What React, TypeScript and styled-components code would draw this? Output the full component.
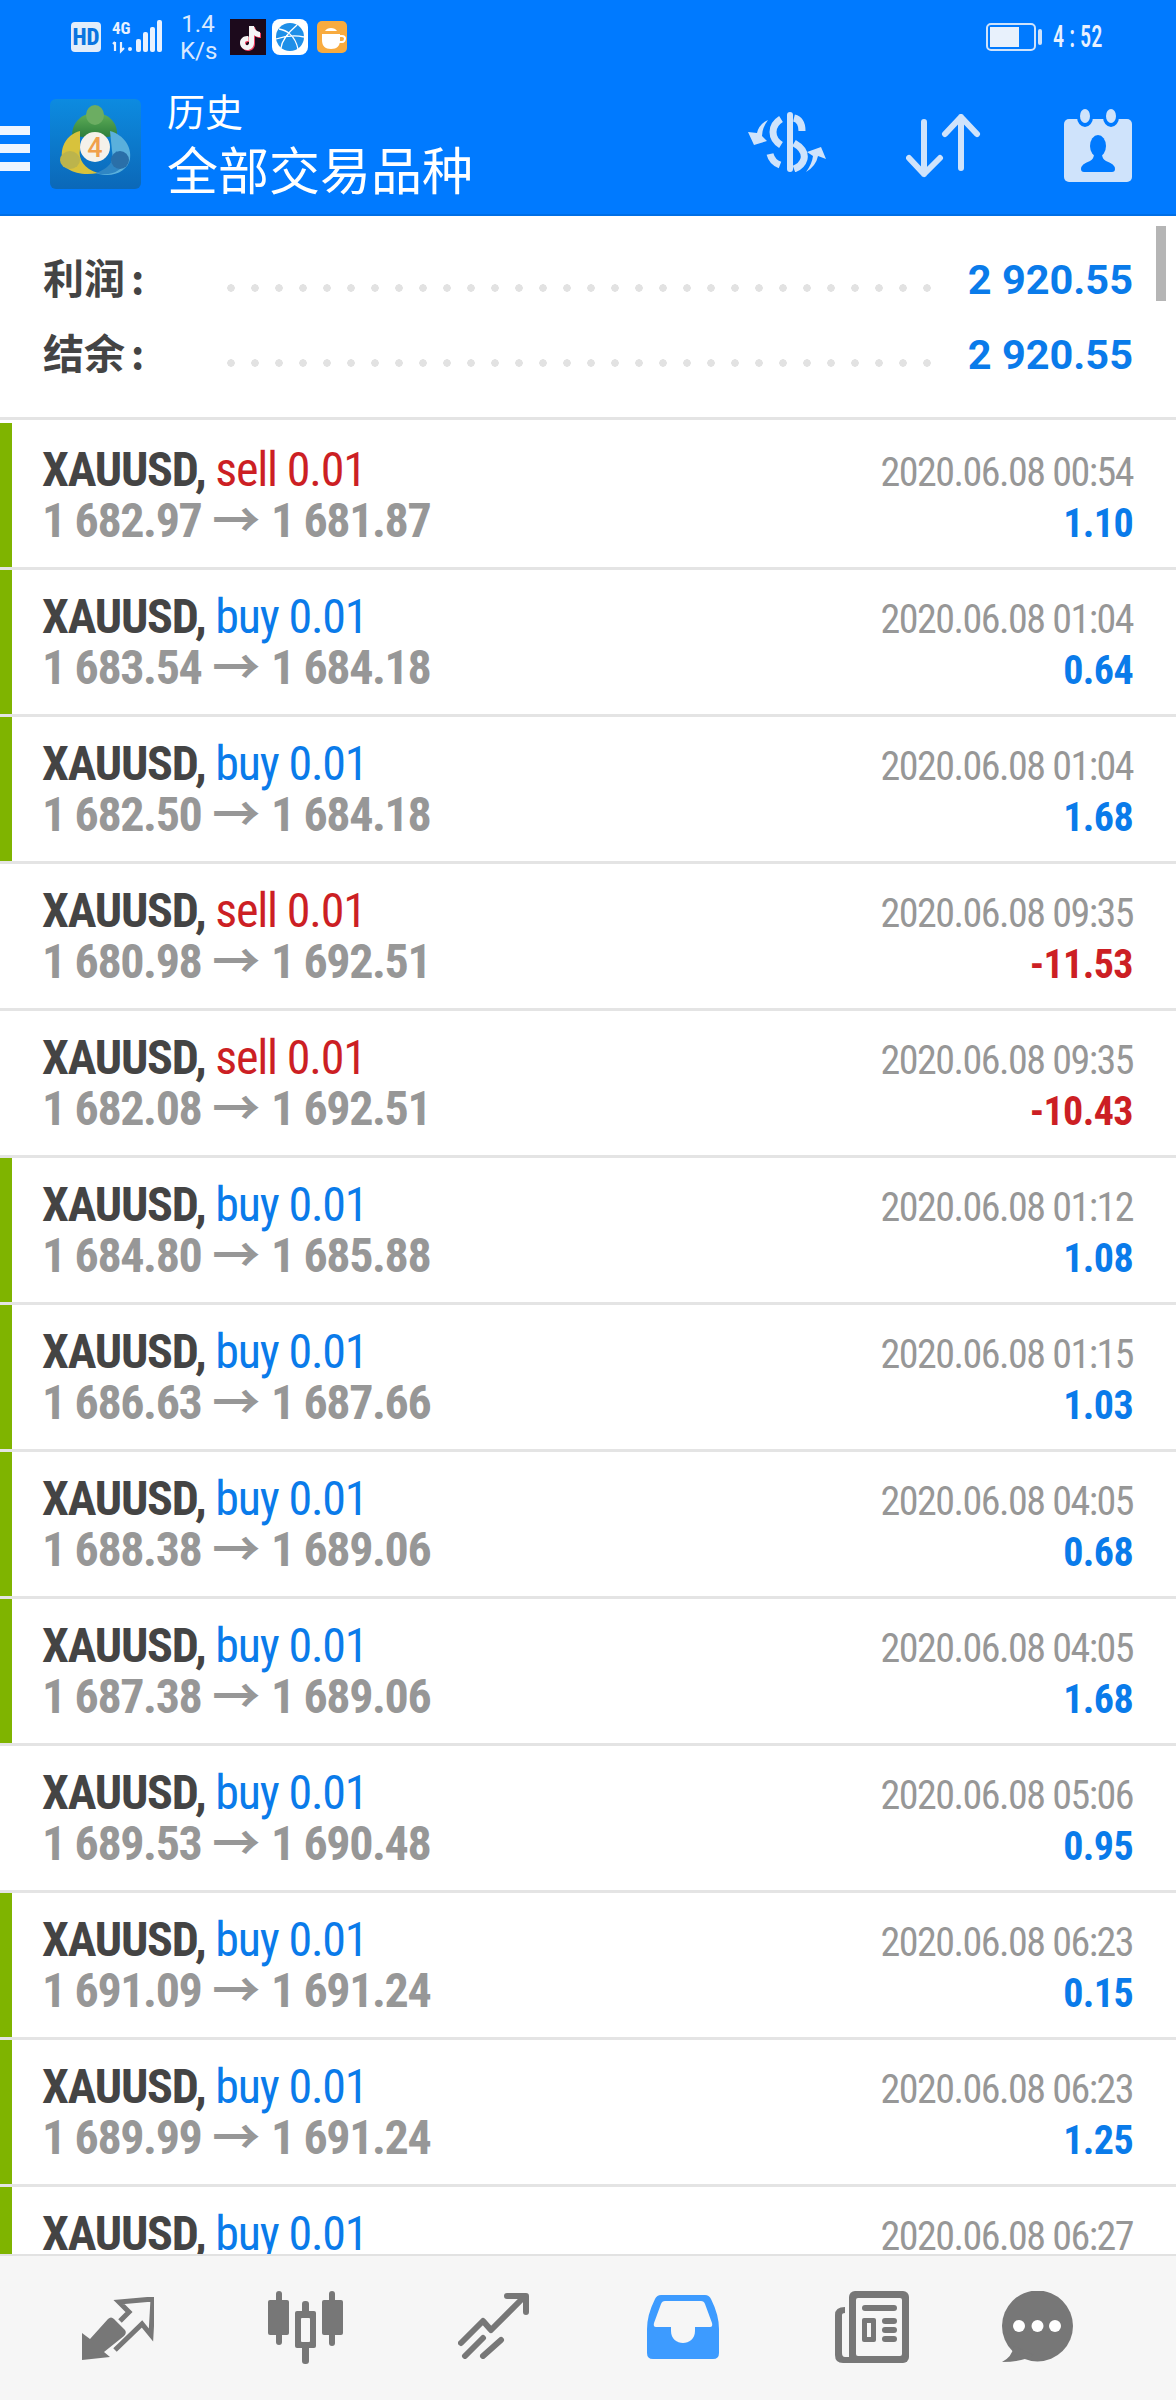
import { createGlobalStyle, styled } from "styled-components";

const GlobalStyle = createGlobalStyle`
  html, body {
    margin: 0;
    padding: 0;
    background: #fff;
  }
  body {
    font-family: Roboto, "Noto Sans CJK SC", sans-serif;
  }
`;

const Page = styled.div`
  width: 1176px;
  height: 2400px;
  display: flex;
  flex-direction: column;
  overflow: hidden;
  position: relative;
`;

const Header = styled.header`
  height: 216px;
  flex: none;
  box-sizing: border-box;
  background: #007aff;
  border-bottom: 2px solid #006fe6;
  display: flex;
  flex-direction: column;
`;

const StatusBar = styled.div`
  height: 97px;
  flex: none;
  padding: 15px 72px 0 71px;
  box-sizing: border-box;
  display: flex;
  align-items: flex-start;
  color: #e8f1ff;
`;

const HdBadge = styled.div`
  width: 30px;
  height: 30px;
  margin-top: 7px;
  border-radius: 4px;
  background: #e3edfa;
  color: #0a74e0;
  font-size: 23px;
  font-weight: 800;
  font-stretch: 75%;
  display: flex;
  align-items: center;
  justify-content: center;
`;

const SignalIcon = styled.svg`
  width: 50px;
  height: 34px;
  margin: 5px 0 0 11px;
`;

const Speed = styled.div`
  width: 36px;
  margin: -4px 0 0 18px;
  font-size: 24px;
  line-height: 27px;
  text-align: center;
  color: #d9e9ff;
`;

const AppBadge = styled.svg`
  width: 36px;
  height: 36px;
  margin: 4px 0 0 6px;
  &:first-of-type {
    margin-left: 0;
  }
`;

const BadgeGroup = styled.div`
  display: flex;
  margin-left: 14px;
`;

const Spacer = styled.div`
  flex: 1;
`;

const Battery = styled.div`
  width: 50px;
  height: 28px;
  margin-top: 8px;
  box-sizing: border-box;
  border: 2px solid #cfe3fb;
  border-radius: 5px;
  padding: 2px;
  position: relative;
  &::after {
    content: "";
    position: absolute;
    right: -8px;
    top: 4px;
    width: 4px;
    height: 16px;
    border-radius: 2px;
    background: #cfe3fb;
  }
`;

const BatteryFill = styled.div`
  width: 68%;
  height: 100%;
  background: #e8f1fc;
`;

const Clock = styled.div`
  width: 51px;
  margin: 6px 0 0 17px;
  font-size: 31px;
  font-weight: 500;
  font-stretch: 75%;
  line-height: 32px;
  white-space: nowrap;
  transform: scaleX(0.72);
  transform-origin: left center;
`;

const Toolbar = styled.div`
  flex: 1;
  display: flex;
  align-items: flex-start;
`;

const MenuButton = styled.div`
  width: 30px;
  margin-top: 29px;
  display: flex;
  flex-direction: column;
  gap: 9px;
  span {
    height: 9px;
    background: #eef5ff;
  }
`;

const Logo = styled.svg`
  width: 91px;
  height: 90px;
  margin: 2px 0 0 20px;
  flex: none;
`;

const Titles = styled.div`
  margin-left: 26px;
  color: #fff;
  font-family: "Noto Sans CJK SC", sans-serif;
  font-weight: 400;
`;

const Title = styled.div`
  font-size: 38px;
  line-height: 48px;
  margin-top: -11px;
`;

const Subtitle = styled.div`
  font-size: 51px;
  line-height: 60px;
  margin-top: 4px;
`;

const ActionIcon = styled.svg<{ $gap: number }>`
  flex: none;
  margin-left: ${(p) => p.$gap}px;
  fill: #cfe3fb;
  stroke: #cfe3fb;
`;

const Summary = styled.section`
  height: 204px;
  flex: none;
  box-sizing: border-box;
  border-bottom: 3px solid #e4e4e4;
  padding: 27px 43px 0 43px;
`;

const SummaryRow = styled.div`
  height: 75px;
  display: flex;
  align-items: center;
`;

const SummaryLabel = styled.div`
  width: 184px;
  flex: none;
  margin-top: -10px;
  font-family: "Noto Sans CJK SC", sans-serif;
  font-size: 41px;
  font-weight: 700;
  color: #444;
`;

const Colon = styled.span`
  margin-left: 6px;
`;

const Dots = styled.div`
  width: 708px;
  flex: none;
  height: 8px;
  margin-top: 14px;
  background: radial-gradient(circle at 4px 4px, #e2e2e2 3.5px, transparent 4px) left / 24px 8px repeat-x;
`;

const SummaryValue = styled.div`
  flex: 1;
  margin-top: -3px;
  text-align: right;
  font-size: 41.5px;
  font-weight: 700;
  color: #0a7bea;
  white-space: nowrap;
`;

const ScrollThumb = styled.div`
  position: absolute;
  left: 1156px;
  top: 226px;
  width: 10px;
  height: 75px;
  background: #b5b5b5;
`;

const List = styled.main`
  flex: 1;
  min-height: 0;
  overflow: hidden;
  padding-top: 3px;
`;

const Row = styled.div`
  height: 147px;
  box-sizing: border-box;
  border-bottom: 3px solid #e4e4e4;
  display: flex;
`;

const Marker = styled.div<{ $on: boolean }>`
  width: 12px;
  flex: none;
  background: ${(p) => (p.$on ? "#7fb400" : "transparent")};
`;

const RowBody = styled.div`
  flex: 1;
  display: flex;
  justify-content: space-between;
  padding: 21px 43px 0 30px;
  font-stretch: 75%;
`;

const Column = styled.div<{ $right?: boolean }>`
  display: flex;
  flex-direction: column;
  align-items: ${(p) => (p.$right ? "flex-end" : "flex-start")};
  padding-top: ${(p) => (p.$right ? 3 : 0)}px;
`;

const Line = styled.div`
  height: 51px;
  line-height: 51px;
  font-size: 48px;
  letter-spacing: -1.2px;
  white-space: nowrap;
`;

const Symbol = styled.span`
  font-weight: 700;
  color: #444;
`;

const Side = styled.span<{ $sell: boolean }>`
  color: ${(p) => (p.$sell ? "#cc1f24" : "#0a7bea")};
`;

const Prices = styled(Line)`
  font-weight: 700;
  letter-spacing: -1.4px;
  color: #979797;
`;

const Arrow = styled.span`
  margin: 0 12px 0 11px;
`;

const DateText = styled(Line)`
  font-size: 40px;
  letter-spacing: -1.5px;
  color: #979797;
`;

const Profit = styled(Line)<{ $loss: boolean }>`
  font-size: 40px;
  font-weight: 700;
  letter-spacing: -0.6px;
  color: ${(p) => (p.$loss ? "#cc1f24" : "#0a7bea")};
`;

const TabBar = styled.nav`
  height: 146px;
  flex: none;
  box-sizing: border-box;
  background: #f6f6f6;
  border-top: 2px solid #e2e2e2;
  display: grid;
  grid-template-columns: 82px 186px 190px 189px 188px 167px 1fr;
  align-items: start;
  padding-top: 35px;
`;

const TabIcon = styled.svg<{ $col: number; $top?: number }>`
  grid-column: ${(p) => p.$col};
  margin-top: ${(p) => p.$top ?? 0}px;
  fill: #777;
  stroke: #777;
`;

const InboxIcon = styled(TabIcon)`
  fill: #3d9bff;
  stroke: none;
`;

type Trade = {
  side: "buy" | "sell";
  open: string;
  close: string;
  time: string;
  profit: string;
  marked: boolean;
};

const trades: Trade[] = [
  { side: "sell", open: "1 682.97", close: "1 681.87", time: "2020.06.08 00:54", profit: "1.10", marked: true },
  { side: "buy", open: "1 683.54", close: "1 684.18", time: "2020.06.08 01:04", profit: "0.64", marked: true },
  { side: "buy", open: "1 682.50", close: "1 684.18", time: "2020.06.08 01:04", profit: "1.68", marked: true },
  { side: "sell", open: "1 680.98", close: "1 692.51", time: "2020.06.08 09:35", profit: "-11.53", marked: false },
  { side: "sell", open: "1 682.08", close: "1 692.51", time: "2020.06.08 09:35", profit: "-10.43", marked: false },
  { side: "buy", open: "1 684.80", close: "1 685.88", time: "2020.06.08 01:12", profit: "1.08", marked: true },
  { side: "buy", open: "1 686.63", close: "1 687.66", time: "2020.06.08 01:15", profit: "1.03", marked: true },
  { side: "buy", open: "1 688.38", close: "1 689.06", time: "2020.06.08 04:05", profit: "0.68", marked: true },
  { side: "buy", open: "1 687.38", close: "1 689.06", time: "2020.06.08 04:05", profit: "1.68", marked: true },
  { side: "buy", open: "1 689.53", close: "1 690.48", time: "2020.06.08 05:06", profit: "0.95", marked: false },
  { side: "buy", open: "1 691.09", close: "1 691.24", time: "2020.06.08 06:23", profit: "0.15", marked: true },
  { side: "buy", open: "1 689.99", close: "1 691.24", time: "2020.06.08 06:23", profit: "1.25", marked: true },
  { side: "buy", open: "1 690.00", close: "1 691.24", time: "2020.06.08 06:27", profit: "1.24", marked: true },
];

function MtLogo() {
  return (
    <Logo viewBox="0 0 91 90">
      <defs>
        <linearGradient id="tile" x1="0" y1="0" x2="0" y2="1">
          <stop offset="0" stopColor="#0d8be0" />
          <stop offset="1" stopColor="#0b68b8" />
        </linearGradient>
        <linearGradient id="leaf" x1="0" y1="0" x2="0" y2="1">
          <stop offset="0" stopColor="#5fae58" />
          <stop offset="1" stopColor="#2f7f3c" />
        </linearGradient>
      </defs>
      <rect width="91" height="90" rx="6" fill="url(#tile)" />
      <path d="M22 37C22 22 33 14 45 14C57 14 68 22 67 37L56 38L34 38Z" fill="url(#leaf)" />
      <ellipse cx="45" cy="16" rx="9" ry="10" fill="#6cad62" />
      <path d="M30 32C16 36 11 48 12 58C10 70 28 78 48 74C34 70 28 60 30 50Z" fill="#d8c23c" />
      <ellipse cx="20" cy="61" rx="10" ry="9" fill="#bcb44c" />
      <path d="M60 32C74 36 82 48 80 60C78 72 62 80 46 74C60 72 64 62 62 52Z" fill="#5ab0dc" />
      <path d="M66 52C64 62 58 70 46 74C60 78 72 72 76 62Z" fill="#2f86c4" />
      <ellipse cx="70" cy="61" rx="9" ry="9" fill="#2a6fa8" />
      <circle cx="45" cy="48" r="15" fill="#f5f1ea" />
      <text x="45" y="58" textAnchor="middle" fontSize="27" fontWeight="500" fontFamily="Roboto, sans-serif" fill="#f0a04b">4</text>
    </Logo>
  );
}

export default function App() {
  return (
    <Page>
      <GlobalStyle />
      <Header>
        <StatusBar>
          <HdBadge>HD</HdBadge>
          <SignalIcon viewBox="0 0 50 34">
            <text x="0" y="14" fontSize="17" fontWeight="700" fontFamily="Roboto, sans-serif" style={{ fontStretch: "75%" }} fill="#e8f1ff">4G</text>
            <path d="M3 22v9M1 24l2-2M9 22v9l3-3" stroke="#e8f1ff" strokeWidth="2.200" fill="none" />
            <g fill="#e8f1ff">
              <rect x="16" y="27" width="4" height="4" rx="2" />
              <rect x="24" y="19" width="5" height="13" rx="2" />
              <rect x="31" y="12" width="5" height="20" rx="2" />
              <rect x="38" y="7" width="5" height="25" rx="2" />
              <rect x="45" y="0" width="5" height="32" rx="2" />
            </g>
          </SignalIcon>
          <Speed>1.4<br />K/s</Speed>
          <BadgeGroup>
            <AppBadge viewBox="0 0 36 36">
              <rect width="36" height="36" fill="#1c0a1c" />
              <path d="M19 7h5c.5 3.500 2.500 5.500 6 6v5c-2.500 0-4.500-.7-6-1.800V24c0 4.500-3.500 7-7 7s-7-3-7-7c0-4.500 4-7.500 8.500-6.800v5c-2-.7-3.500.3-3.500 1.800 0 1.400 1 2.200 2 2.200s2-.8 2-2.200z" fill="#f04060" transform="translate(1 1)" />
              <path d="M19 7h5c.5 3.500 2.500 5.500 6 6v5c-2.500 0-4.500-.7-6-1.800V24c0 4.500-3.500 7-7 7s-7-3-7-7c0-4.500 4-7.500 8.500-6.800v5c-2-.7-3.500.3-3.500 1.800 0 1.400 1 2.200 2 2.200s2-.8 2-2.200z" fill="#f5f5f5" />
            </AppBadge>
            <AppBadge viewBox="0 0 36 36">
              <rect width="36" height="36" rx="8" fill="#fff" />
              <circle cx="18" cy="18" r="14" fill="#1e8fe8" />
              <path d="M7 10c7 1 16 6 19 20M25 6C18 12 10 20 9 29M4 20c9-3 19-4 28-2" stroke="#fff" strokeWidth="1.300" fill="none" />
            </AppBadge>
            <AppBadge viewBox="0 0 36 36">
              <rect x="3" y="2" width="30" height="32" rx="5" fill="#f8ab3f" />
              <path d="M8 15h18v6c0 6-3 9-9 9s-9-3-9-9z" fill="#fff" />
              <path d="M25 17h3c2 0 3 1 3 2.500S30 23 28 23h-3" stroke="#fff" strokeWidth="2" fill="none" />
              <path d="M11 12c2-4 10-4 12 0z" fill="#fff" />
            </AppBadge>
          </BadgeGroup>
          <Spacer />
          <Battery><BatteryFill /></Battery>
          <Clock>4 : 52</Clock>
        </StatusBar>
        <Toolbar>
          <MenuButton><span /><span /><span /></MenuButton>
          <MtLogo />
          <Titles>
            <Title>历史</Title>
            <Subtitle>全部交易品种</Subtitle>
          </Titles>
          <Spacer />
          <ActionIcon $gap={0} width="78" height="60" viewBox="0 0 78 60" style={{ marginTop: 15 }} strokeWidth="0">
            <rect x="39" width="6" height="60" rx="3" />
            <g fill="none" strokeWidth="7">
              <path d="M33 7Q25 12 25 20Q25 28 33 33" />
              <path d="M46 6Q54 8 54 19" />
              <path d="M22 42Q24 50 32 53" />
              <path d="M46 31Q58 38 56 47Q54 54 46 57" />
            </g>
            <path d="M20 8Q11 12 9 21L0 20L6 33L19 29L14 24Q14 16 20 8z" strokeWidth="0" />
            <path d="M58 60Q68 54 70 44L78 47L73 35L59 40L65 44Q64 52 58 60z" strokeWidth="0" />
          </ActionIcon>
          <ActionIcon $gap={80} width="75" height="64" viewBox="0 0 75 64" style={{ marginTop: 17 }} fill="none" strokeWidth="6" strokeLinecap="round" strokeLinejoin="round">
            <path d="M18 8V60M3 44L18 60L34 44" fill="none" />
            <path d="M55 3V54M39 20L55 3L71 20" fill="none" />
          </ActionIcon>
          <ActionIcon $gap={83} width="68" height="73" viewBox="0 0 68 73" style={{ marginTop: 12, marginRight: 44 }} strokeWidth="0">
            <rect y="10" width="68" height="63" rx="5" />
            <ellipse cx="21" cy="8" rx="8" ry="10" fill="#007aff" />
            <ellipse cx="47" cy="8" rx="8" ry="10" fill="#007aff" />
            <ellipse cx="21" cy="7" rx="5" ry="7" />
            <ellipse cx="47" cy="7" rx="5" ry="7" />
            <ellipse cx="34" cy="37" rx="8" ry="11" fill="#007aff" />
            <path d="M17 60Q17 55 26 52Q30 50 30 45H38Q38 50 42 52Q51 55 51 60Q51 63 48 63H20Q17 63 17 60z" fill="#007aff" />
          </ActionIcon>
        </Toolbar>
      </Header>
      <Summary>
        <SummaryRow>
          <SummaryLabel>利润<Colon>:</Colon></SummaryLabel>
          <Dots />
          <SummaryValue>2 920.55</SummaryValue>
        </SummaryRow>
        <SummaryRow>
          <SummaryLabel>结余<Colon>:</Colon></SummaryLabel>
          <Dots />
          <SummaryValue>2 920.55</SummaryValue>
        </SummaryRow>
      </Summary>
      <ScrollThumb />
      <List>
        {trades.map((t, i) => (
          <Row key={i}>
            <Marker $on={t.marked} />
            <RowBody>
              <Column>
                <Line>
                  <Symbol>XAUUSD, </Symbol>
                  <Side $sell={t.side === "sell"}>{t.side} 0.01</Side>
                </Line>
                <Prices>
                  {t.open}
                  <Arrow>→</Arrow>
                  {t.close}
                </Prices>
              </Column>
              <Column $right>
                <DateText>{t.time}</DateText>
                <Profit $loss={t.profit.startsWith("-")}>{t.profit}</Profit>
              </Column>
            </RowBody>
          </Row>
        ))}
      </List>
      <TabBar>
        <TabIcon $col={2} $top={6} width="72" height="63" viewBox="0 0 72 63" strokeWidth="0">
          <path d="M0 63V36L8 42L26 22Q29 19 32 22L43 33Q45 36 42 39L22 55L28 60z" />
          <path d="M38 24L47 15L37 5L71 2L69 38L60 27L33 53" fill="none" strokeWidth="5" />
        </TabIcon>
        <TabIcon $col={3} width="75" height="73" viewBox="0 0 75 73" strokeWidth="0">
          <rect x="8" width="6" height="54" rx="3" />
          <rect y="9" width="21" height="35" rx="2" />
          <rect x="34" y="10" width="7" height="63" rx="3" />
          <rect x="27" y="20" width="21" height="37" rx="2" />
          <rect x="33" y="27" width="9" height="24" rx="1" fill="#f6f6f6" />
          <rect x="61" width="6" height="55" rx="3" />
          <rect x="54" y="9" width="21" height="35" rx="2" />
        </TabIcon>
        <TabIcon $col={4} $top={2} width="71" height="66" viewBox="0 0 71 66" fill="none" strokeWidth="6" strokeLinecap="round" strokeLinejoin="round">
          <path d="M3 50L25 28L33 37L66 4M49 3L68 3L68 19" fill="none" />
          <path d="M7 63L25 45M25 63L43 47" fill="none" />
        </TabIcon>
        <InboxIcon $col={5} $top={2} width="72" height="66" viewBox="0 0 72 66">
          <path fillRule="evenodd" d="M14 2H58Q62 2 64 6Q72 22 72 36V60Q72 66 66 66H6Q0 66 0 60V36Q0 22 8 6Q10 2 14 2zM18 8Q15 8 14 11L7 30Q6 34 9 34H24V38C24 46 30 50 36 50S48 46 48 38V34H63Q66 34 65 30L58 11Q57 8 54 8z" />
        </InboxIcon>
        <TabIcon $col={6} width="74" height="72" viewBox="0 0 74 72" strokeWidth="0">
          <rect x="14" width="60" height="72" rx="6" />
          <rect x="21" y="7" width="46" height="58" rx="2" fill="#f6f6f6" />
          <path d="M10 16Q0 16 0 24V64Q0 72 8 72H20V66H10Q7 66 7 62V24Q7 22 10 22z" />
          <rect x="27" y="14" width="35" height="6" rx="3" />
          <rect x="27" y="27" width="14" height="24" rx="2" />
          <rect x="32" y="32" width="4" height="14" fill="#f6f6f6" />
          <rect x="47" y="27" width="15" height="6" rx="3" />
          <rect x="47" y="36" width="15" height="6" rx="3" />
          <rect x="47" y="45" width="15" height="6" rx="3" />
        </TabIcon>
        <TabIcon $col={7} width="71" height="72" viewBox="0 0 71 72" strokeWidth="0">
          <circle cx="35.500" cy="35" r="35.500" />
          <path d="M12 55Q10 66 0 71Q20 71 32 64z" />
          <circle cx="17" cy="35" r="6" fill="#fff" />
          <circle cx="35.500" cy="35" r="6" fill="#fff" />
          <circle cx="53" cy="35" r="6" fill="#fff" />
        </TabIcon>
      </TabBar>
    </Page>
  );
}
